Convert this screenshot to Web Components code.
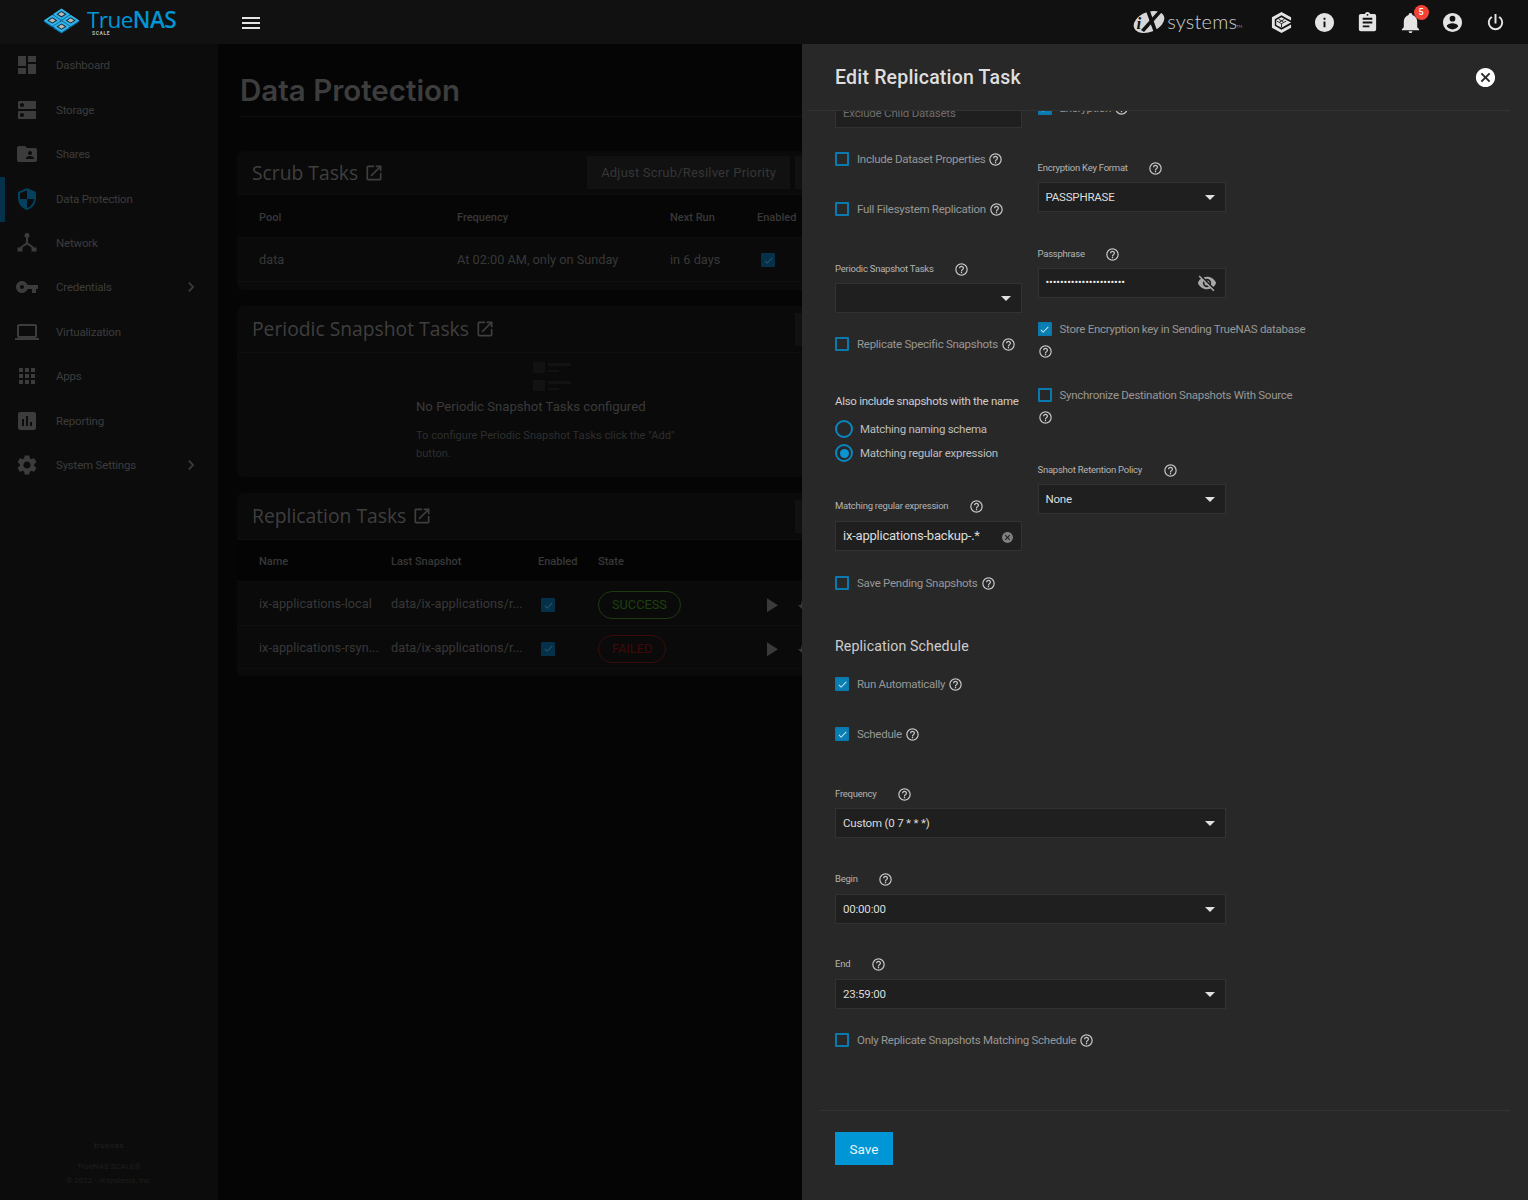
<!DOCTYPE html>
<html lang="en">
<head>
<meta charset="utf-8">
<title>Data Protection</title>
<style>
  html, body { margin: 0; background: #050505; }
  body { font-family: Roboto, "Liberation Sans", sans-serif; }
</style>
</head>
<body>
<tn-app>
  <tn-topbar slot="top"></tn-topbar>
  <tn-sidenav slot="nav">
    <tn-nav-item icon="dashboard">Dashboard</tn-nav-item>
    <tn-nav-item icon="storage">Storage</tn-nav-item>
    <tn-nav-item icon="shares">Shares</tn-nav-item>
    <tn-nav-item icon="shield" active>Data Protection</tn-nav-item>
    <tn-nav-item icon="network">Network</tn-nav-item>
    <tn-nav-item icon="key" more>Credentials</tn-nav-item>
    <tn-nav-item icon="laptop">Virtualization</tn-nav-item>
    <tn-nav-item icon="apps">Apps</tn-nav-item>
    <tn-nav-item icon="chart">Reporting</tn-nav-item>
    <tn-nav-item icon="gear" more>System Settings</tn-nav-item>
  </tn-sidenav>
  <tn-main slot="main">
    <tn-card heading="Scrub Tasks" action="Adjust Scrub/Resilver Priority" head-height="44" style="height:139px">
      <tn-table cols="198px 213px 87px 100px">
        <tn-row head style="padding-top:4px"><span>Pool</span><span>Frequency</span><span>Next Run</span><span>Enabled</span></tn-row>
        <tn-row style="padding-top:1px"><span>data</span><span>At 02:00 AM, only on Sunday</span><span>in 6 days</span><tn-tick></tn-tick></tn-row>
      </tn-table>
    </tn-card>
    <tn-card heading="Periodic Snapshot Tasks" head-height="47" style="height:171px;margin-top:16px">
      <tn-empty heading="No Periodic Snapshot Tasks configured">To configure Periodic Snapshot Tasks click the "Add" button.</tn-empty>
    </tn-card>
    <tn-card heading="Replication Tasks" head-height="47" style="height:183px;margin-top:16px">
      <tn-table cols="132px 147px 60px 161px 38px 30px">
        <tn-row head dark style="height:42px;padding-top:2px"><span>Name</span><span>Last Snapshot</span><span>Enabled</span><span>State</span></tn-row>
        <tn-row style="height:43.5px;padding-top:2px"><span>ix-applications-local</span><span>data/ix-applications/r...</span><tn-tick style="margin:2px 0 0 3px"></tn-tick><tn-chip kind="ok">SUCCESS</tn-chip><tn-icon name="play" size="24" color="#3a3a3a"></tn-icon><tn-icon name="restore" size="24" color="#3a3a3a"></tn-icon></tn-row>
        <tn-row style="height:43.5px;padding-top:2px"><span>ix-applications-rsyn...</span><span>data/ix-applications/r...</span><tn-tick style="margin:2px 0 0 3px"></tn-tick><tn-chip kind="bad">FAILED</tn-chip><tn-icon name="play" size="24" color="#3a3a3a"></tn-icon><tn-icon name="restore" size="24" color="#3a3a3a"></tn-icon></tn-row>
      </tn-table>
    </tn-card>
  </tn-main>
  <tn-slidein slot="panel" heading="Edit Replication Task">
    <tn-form-cols slot="form">
      <div slot="left">
        <tn-field dim value="Exclude Child Datasets"></tn-field>
        <tn-check style="margin-top:22px">Include Dataset Properties</tn-check>
        <tn-check style="margin-top:32px">Full Filesystem Replication</tn-check>
        <tn-label style="margin-top:43px;width:180px">Periodic Snapshot Tasks</tn-label>
        <tn-field select style="margin-top:6px"></tn-field>
        <tn-check style="margin-top:22px">Replicate Specific Snapshots</tn-check>
        <tn-heading style="margin-top:40px">Also include snapshots with the name</tn-heading>
        <tn-radio style="margin-top:10px">Matching naming schema</tn-radio>
        <tn-radio on style="margin-top:4px">Matching regular expression</tn-radio>
        <tn-label style="margin-top:35px">Matching regular expression</tn-label>
        <tn-field clear value="ix-applications-backup-.*" style="margin-top:7px"></tn-field>
        <tn-check style="margin-top:23px">Save Pending Snapshots</tn-check>
      </div>
      <div slot="right">
        <tn-check on style="margin-top:1px">Encryption</tn-check>
        <tn-label style="margin-top:43px">Encryption Key Format</tn-label>
        <tn-field select value="PASSPHRASE" style="margin-top:6px"></tn-field>
        <tn-label style="margin-top:34px">Passphrase</tn-label>
        <tn-field secret value="••••••••••••••••••••••" style="margin-top:6px"></tn-field>
        <tn-check wrap on style="margin-top:22px">Store Encryption key in Sending TrueNAS database</tn-check>
        <tn-check wrap style="margin-top:27px">Synchronize Destination Snapshots With Source</tn-check>
        <tn-label style="margin-top:37px">Snapshot Retention Policy</tn-label>
        <tn-field select value="None" style="margin-top:6px"></tn-field>
      </div>
    </tn-form-cols>
    <div slot="form" style="width:390.5px">
      <tn-heading big style="margin-top:45px">Replication Schedule</tn-heading>
      <tn-check on style="margin-top:20px">Run Automatically</tn-check>
      <tn-check on style="margin-top:32px">Schedule</tn-check>
      <tn-label style="margin-top:43px">Frequency</tn-label>
      <tn-field select value="Custom (0 7 * * *)" style="margin-top:6px"></tn-field>
      <tn-label style="margin-top:33px">Begin</tn-label>
      <tn-field select value="00:00:00" style="margin-top:7px"></tn-field>
      <tn-label style="margin-top:32px">End</tn-label>
      <tn-field select value="23:59:00" style="margin-top:7px"></tn-field>
      <tn-check style="margin-top:22px">Only Replicate Snapshots Matching Schedule</tn-check>
    </div>
  </tn-slidein>
</tn-app>

<script>
// material icon paths, all on a 24 box
const ICONS = {
  menu: 'M3,6H21V8H3V6M3,11H21V13H3V11M3,16H21V18H3V16Z',
  info: 'M13,9H11V7H13M13,17H11V11H13M12,2A10,10 0 0,0 2,12A10,10 0 0,0 12,22A10,10 0 0,0 22,12A10,10 0 0,0 12,2Z',
  clipboard: 'M17,9H7V7H17M17,13H7V11H17M14,17H7V15H14M12,3A1,1 0 0,1 13,4A1,1 0 0,1 12,5A1,1 0 0,1 11,4A1,1 0 0,1 12,3M19,3H14.82C14.4,1.84 13.3,1 12,1C10.7,1 9.6,1.84 9.18,3H5A2,2 0 0,0 3,5V19A2,2 0 0,0 5,21H19A2,2 0 0,0 21,19V5A2,2 0 0,0 19,3Z',
  bell: 'M21,19V20H3V19L5,17V11C5,7.9 7.03,5.17 10,4.29C10,4.19 10,4.1 10,4A2,2 0 0,1 12,2A2,2 0 0,1 14,4C14,4.1 14,4.19 14,4.29C16.97,5.17 19,7.9 19,11V17L21,19M14,21A2,2 0 0,1 12,23A2,2 0 0,1 10,21',
  account: 'M12,19.2C9.5,19.2 7.29,17.92 6,16C6.03,14 10,12.9 12,12.9C14,12.9 17.97,14 18,16C16.71,17.92 14.5,19.2 12,19.2M12,5A3,3 0 0,1 15,8A3,3 0 0,1 12,11A3,3 0 0,1 9,8A3,3 0 0,1 12,5M12,2A10,10 0 0,0 2,12A10,10 0 0,0 12,22A10,10 0 0,0 22,12A10,10 0 0,0 12,2Z',
  power: 'M16.56,5.44L15.11,6.89C16.84,7.94 18,9.83 18,12A6,6 0 0,1 12,18A6,6 0 0,1 6,12C6,9.83 7.16,7.94 8.88,6.88L7.44,5.44C5.36,6.88 4,9.28 4,12A8,8 0 0,0 12,20A8,8 0 0,0 20,12C20,9.28 18.64,6.88 16.56,5.44M13,3H11V13H13',
  help: 'M11,18H13V16H11V18M12,2A10,10 0 0,0 2,12A10,10 0 0,0 12,22A10,10 0 0,0 22,12A10,10 0 0,0 12,2M12,20C7.59,20 4,16.41 4,12C4,7.59 7.59,4 12,4C16.41,4 20,7.59 20,12C20,16.41 16.41,20 12,20M12,6A4,4 0 0,0 8,10H10A2,2 0 0,1 12,8A2,2 0 0,1 14,10C14,12 11,11.75 11,15H13C13,12.75 16,12.5 16,10A4,4 0 0,0 12,6Z',
  close: 'M12,2C17.53,2 22,6.47 22,12C22,17.53 17.53,22 12,22C6.47,22 2,17.53 2,12C2,6.47 6.47,2 12,2M15.59,7L12,10.59L8.41,7L7,8.41L10.59,12L7,15.59L8.41,17L12,13.41L15.59,17L17,15.59L13.41,12L17,8.41L15.59,7Z',
  eyeoff: 'M11.83,9L15,12.16C15,12.11 15,12.05 15,12A3,3 0 0,0 12,9C11.94,9 11.89,9 11.83,9M7.53,9.8L9.08,11.35C9.03,11.56 9,11.77 9,12A3,3 0 0,0 12,15C12.22,15 12.44,14.97 12.65,14.92L14.2,16.47C13.53,16.8 12.79,17 12,17A5,5 0 0,1 7,12C7,11.21 7.2,10.47 7.53,9.8M2,4.27L4.28,6.55L4.73,7C3.08,8.3 1.78,10 1,12C2.73,16.39 7,19.5 12,19.5C13.55,19.5 15.03,19.2 16.38,18.66L16.81,19.08L19.73,22L21,20.73L3.27,3M12,7A5,5 0 0,1 17,12C17,12.64 16.87,13.26 16.64,13.82L19.57,16.75C21.07,15.5 22.27,13.86 23,12C21.27,7.61 17,4.5 12,4.5C10.6,4.5 9.26,4.75 8,5.2L10.17,7.35C10.74,7.13 11.35,7 12,7Z',
  dashboard: 'M13,3V9H21V3M13,21H21V11H13M3,21H11V15H3M3,13H11V3H3V13Z',
  storage: 'M20 13H4c-.55 0-1 .45-1 1v6c0 .55.45 1 1 1h16c.55 0 1-.45 1-1v-6c0-.55-.45-1-1-1zM7 19c-1.1 0-2-.9-2-2s.9-2 2-2 2 .9 2 2-.9 2-2 2zM20 3H4c-.55 0-1 .45-1 1v6c0 .55.45 1 1 1h16c.55 0 1-.45 1-1V4c0-.55-.45-1-1-1zM7 9c-1.1 0-2-.9-2-2s.9-2 2-2 2 .9 2 2-.9 2-2 2z',
  shares: 'M20 6h-8l-2-2H4c-1.1 0-1.99.9-1.99 2L2 18c0 1.1.9 2 2 2h16c1.1 0 2-.9 2-2V8c0-1.1-.9-2-2-2zm-5 3c1.1 0 2 .9 2 2s-.9 2-2 2-2-.9-2-2 .9-2 2-2zm4 8h-8v-1c0-1.33 2.67-2 4-2s4 .67 4 2v1z',
  shield: 'M12 1L3 5v6c0 5.55 3.84 10.74 9 12 5.16-1.26 9-6.45 9-12V5l-9-4zm0 10.99h7c-.53 4.12-3.28 7.79-7 8.94V12H5V6.3l7-3.11v8.8z',
  network: 'M12 2a2.5 2.5 0 1 1-.01 0zM11 6.5h2v5.2l6 4.2-1.1 1.6-5.9-4.1-5.9 4.1L5 15.9l6-4.2zM2.5 16.5h5v4h-5zM16.5 16.5h5v4h-5z',
  key: 'M12.65 10C11.83 7.67 9.61 6 7 6c-3.31 0-6 2.69-6 6s2.69 6 6 6c2.61 0 4.83-1.67 5.65-4H17v4h4v-4h2v-4H12.65zM7 14c-1.1 0-2-.9-2-2s.9-2 2-2 2 .9 2 2-.9 2-2 2z',
  laptop: 'M20 18c1.1 0 1.99-.9 1.99-2L22 6c0-1.1-.9-2-2-2H4c-1.1 0-2 .9-2 2v10c0 1.1.9 2 2 2H0v2h24v-2h-4zM4 6h16v10H4V6z',
  apps: 'M4 8h4V4H4v4zm6 12h4v-4h-4v4zm-6 0h4v-4H4v4zm0-6h4v-4H4v4zm6 0h4v-4h-4v4zm6-10v4h4V4h-4zm-6 4h4V4h-4v4zm6 6h4v-4h-4v4zm0 6h4v-4h-4v4z',
  chart: 'M19 3H5c-1.1 0-2 .9-2 2v14c0 1.1.9 2 2 2h14c1.1 0 2-.9 2-2V5c0-1.1-.9-2-2-2zM9 17H7v-7h2v7zm4 0h-2V7h2v10zm4 0h-2v-4h2v4z',
  gear: 'M19.14 12.94c.04-.3.06-.61.06-.94 0-.32-.02-.64-.07-.94l2.03-1.58c.18-.14.23-.41.12-.61l-1.92-3.32c-.12-.22-.37-.29-.59-.22l-2.39.96c-.5-.38-1.03-.7-1.62-.94l-.36-2.54c-.04-.24-.24-.41-.48-.41h-3.84c-.24 0-.43.17-.47.41l-.36 2.54c-.59.24-1.13.57-1.62.94l-2.39-.96c-.22-.08-.47 0-.59.22L2.74 8.87c-.12.21-.08.47.12.61l2.03 1.58c-.05.3-.09.63-.09.94s.02.64.07.94l-2.03 1.58c-.18.14-.23.41-.12.61l1.92 3.32c.12.22.37.29.59.22l2.39-.96c.5.38 1.03.7 1.62.94l.36 2.54c.05.24.24.41.48.41h3.84c.24 0 .44-.17.47-.41l.36-2.54c.59-.24 1.13-.56 1.62-.94l2.39.96c.22.08.47 0 .59-.22l1.92-3.32c.12-.22.07-.47-.12-.61l-2.01-1.58zM12 15.6c-1.98 0-3.6-1.62-3.6-3.6s1.62-3.6 3.6-3.6 3.6 1.62 3.6 3.6-1.62 3.6-3.6 3.6z',
  open: 'M19 19H5V5h7V3H5c-1.11 0-2 .9-2 2v14c0 1.1.89 2 2 2h14c1.1 0 2-.9 2-2v-7h-2v7zM14 3v2h3.59l-9.83 9.83 1.41 1.41L19 6.41V10h2V3h-7z',
  chevron: 'M8.59,16.58L13.17,12L8.59,7.41L10,6L16,12L10,18L8.59,16.58Z',
  check: 'M21,7L9,19L3.5,13.5L4.91,12.09L9,16.17L19.59,5.59L21,7Z',
  play: 'M8,5.14V19.14L19,12.14L8,5.14Z',
  restore: 'M13,3A9,9 0 0,0 4,12H1L5,16L9,12H6A7,7 0 0,1 13,5A7,7 0 0,1 20,12A7,7 0 0,1 13,19V21A9,9 0 0,0 13,3Z'
};

// every element in this page is a small shadow component, this saves repeating the attach
class Base extends HTMLElement {
  render(html) {
    if (!this.shadowRoot) this.attachShadow({mode: 'open'});
    this.shadowRoot.innerHTML = html;
  }
}

class TnIcon extends Base {
  connectedCallback() {
    const size = this.getAttribute('size') || 24;
    const color = this.getAttribute('color') || 'currentColor';
    this.render(`<style>:host{display:inline-flex;flex:none;width:${size}px;height:${size}px}svg{display:block}</style>
      <svg width="${size}" height="${size}" viewBox="0 0 24 24" fill="${color}"><path d="${ICONS[this.getAttribute('name')]}"/></svg>`);
  }
}
customElements.define('tn-icon', TnIcon);

class TnApp extends Base {
  connectedCallback() {
    this.render(`<style>
      :host{display:block;position:relative;width:1528px;height:1200px;overflow:hidden}
      .body{display:flex;height:1156px}
      .panel{position:absolute;top:44px;right:0;bottom:0;width:726px}
    </style>
    <slot name="top"></slot>
    <div class="body"><slot name="nav"></slot><slot name="main"></slot></div>
    <div class="panel"><slot name="panel"></slot></div>`);
  }
}
customElements.define('tn-app', TnApp);

class TnLogo extends Base {
  connectedCallback() {
    // isometric mark: four blue tiles, each with a grey centre
    const diamond = (cx, cy, w, h, fill) => `<polygon points="${cx},${cy - h} ${cx + w},${cy} ${cx},${cy + h} ${cx - w},${cy}" fill="${fill}"/>`;
    let tiles = '';
    [[18.5, 6.2], [9.3, 12.4], [27.7, 12.4], [18.5, 18.6]].forEach(([cx, cy]) => {
      tiles += diamond(cx, cy + 1.4, 8.6, 5.6, '#0b6ea6');
      tiles += diamond(cx, cy, 8.6, 5.6, '#2fb3ea');
      tiles += diamond(cx, cy, 5, 3.2, '#0e2530');
      tiles += diamond(cx, cy, 3.3, 2.1, '#b9b9b9');
    });
    this.render(`<style>
      :host{display:block;position:relative;width:140px;height:44px;flex:none}
      .wrap{display:flex;align-items:center;height:44px}
      svg{flex:none;display:block;margin-top:-3px}
      .name{font:400 22.6px/22px "Open Sans",Roboto,sans-serif;color:#0095d5;margin-left:7px;margin-top:-5px;letter-spacing:-.6px}
      .name b{font-weight:600}
      .scale{position:absolute;left:49px;top:31px;font:700 5px/5px Roboto,sans-serif;color:#bbb;letter-spacing:.6px}
    </style>
    <div class="wrap"><svg width="37" height="26" viewBox="0 0 37 26">${tiles}</svg><span class="name">True<b>NAS</b></span></div>
    <span class="scale">SCALE</span>`);
  }
}
customElements.define('tn-logo', TnLogo);

class TnTopbar extends Base {
  connectedCallback() {
    this.render(`<style>
      :host{display:flex;align-items:center;height:44px;background:#111;box-sizing:border-box;padding-left:43px;color:#e4e4e4}
      .menu{margin-left:56px;margin-top:1px;display:flex}
      .right{margin-left:auto;display:flex;align-items:center}
      .brand{display:flex;align-items:center;width:137px;color:#cfcfcf}
      .brand span{font:300 20px/24px Lato,sans-serif;margin-left:2px;margin-top:-2px;letter-spacing:.2px}
      .brand sup{font:300 4px/5px Lato,sans-serif;align-self:flex-start;margin-top:15px;margin-left:-1px}
      .icons{display:flex;gap:19.75px;padding-right:21px;align-items:center}
      .bell{position:relative;display:flex}
      .badge{position:absolute;left:15px;top:-6px;width:15px;height:15px;border-radius:50%;background:#f44336;color:#fff;font:500 9px/15px Roboto,sans-serif;text-align:center}
    </style>
    <tn-logo></tn-logo>
    <span class="menu"><tn-icon name="menu" size="24"></tn-icon></span>
    <div class="right">
      <div class="brand">
        <svg width="32" height="26" viewBox="0 0 32 26"><ellipse cx="16" cy="13" rx="16" ry="10" transform="rotate(-22 16 13)" fill="#d6d6d6"/><path d="M13 2 L17 2 L25 24 L21 24Z" fill="#111"/><path d="M29 3 L11 23 L8 21 L26 1Z" fill="#111"/><text x="3.5" y="20" font-family="Liberation Serif,serif" font-style="italic" font-weight="700" font-size="17" fill="#111">i</text></svg>
        <span>systems</span><sup>TM</sup>
      </div>
      <div class="icons">
        <svg width="23" height="23" viewBox="0 0 24 24" style="margin-left:-.5px;margin-right:.5px"><path d="M12 1 22 6.5V10L17 7.3 12 4.5 5 8.5V15.5L12 19.5 22 14V17.5L12 23 2 17.5V6.5Z" fill="#e4e4e4"/><path d="M12 6.5 18 10 22 12 18 14 12 17.5 6.5 14.5V9.5Z" fill="#e4e4e4"/><path d="M7 10.5 12 13.2 17 10.5M12 13.2V17M9 8.6 14 11.4M15 8.6 10 11.4" stroke="#111" stroke-width=".9" fill="none"/></svg>
        <tn-icon name="info" size="23"></tn-icon>
        <tn-icon name="clipboard" size="23"></tn-icon>
        <span class="bell"><tn-icon name="bell" size="23"></tn-icon><span class="badge">5</span></span>
        <tn-icon name="account" size="23"></tn-icon>
        <tn-icon name="power" size="23"></tn-icon>
      </div>
    </div>`);
  }
}
customElements.define('tn-topbar', TnTopbar);

class TnSidenav extends Base {
  connectedCallback() {
    this.render(`<style>
      :host{display:flex;flex-direction:column;flex:none;width:218px;height:1156px;background:#0c0c0c;box-sizing:border-box}
      .foot{margin-top:auto;padding-bottom:12px;text-align:center;font:400 8px/14px Roboto,sans-serif;color:#1e1e1e}
      .foot div:first-child{margin-bottom:7px;font-weight:500;letter-spacing:.4px}
    </style>
    <slot></slot>
    <div class="foot"><div>truenas</div><div>TrueNAS SCALE®</div><div>© 2022 - iXsystems, Inc.</div></div>`);
  }
}
customElements.define('tn-sidenav', TnSidenav);

class TnNavItem extends Base {
  connectedCallback() {
    const active = this.hasAttribute('active');
    this.render(`<style>
      :host{display:flex;align-items:center;height:44.44px;position:relative;font:400 11.5px/16px Roboto,sans-serif;letter-spacing:-.2px;color:#3c3c3c;box-sizing:border-box;padding-bottom:2px;padding-left:${active ? 10 : 15}px;border-left:${active ? '5px solid #04324a' : '0'}}
      .txt{margin-left:17px}
      .arrow{margin-left:auto;margin-right:17px;display:flex}
    </style>
    <tn-icon name="${this.getAttribute('icon')}" size="24" color="${active ? '#05405f' : '#3c3c3c'}"></tn-icon>
    <span class="txt"><slot></slot></span>
    ${this.hasAttribute('more') ? '<span class="arrow"><tn-icon name="chevron" size="20" color="#3c3c3c"></tn-icon></span>' : ''}`);
  }
}
customElements.define('tn-nav-item', TnNavItem);

class TnMain extends Base {
  connectedCallback() {
    this.render(`<style>
      :host{display:block;flex:1;min-width:0;overflow:hidden;background:#050505;padding:0 18px 0 19px;box-sizing:border-box}
      h1{margin:0 0 0 3px;height:73px;box-sizing:border-box;padding-top:29px;font:600 29.5px/34px Inter,Roboto,sans-serif;color:#3d3d3d;border-bottom:1px solid #0e0e0e}
      .cards{padding-top:34px}
    </style>
    <h1>Data Protection</h1>
    <div class="cards"><slot></slot></div>`);
  }
}
customElements.define('tn-main', TnMain);

class TnCard extends Base {
  connectedCallback() {
    const action = this.getAttribute('action');
    this.render(`<style>
      :host{display:block;background:#0a0a0a;border-radius:6px;overflow:hidden}
      .head{display:flex;align-items:center;height:${this.getAttribute('head-height')}px;padding:0 0 0 15px;border-bottom:1px solid #0e0e0e;box-sizing:border-box}
      h3{margin:0;font:400 19.3px/24px "Open Sans",Roboto,sans-serif;color:#3f3f3f;letter-spacing:0}
      tn-icon{margin-left:6px}
      .actions{margin-left:auto;display:flex;gap:5px;position:relative;left:-655px}
      button{all:unset;height:33px;background:#111;color:#363636;font:400 13px/33px Roboto,sans-serif;padding:0 14px;letter-spacing:.2px;white-space:nowrap}
      button.blank{width:60px;padding:0}
    </style>
    <div class="head"><h3>${this.getAttribute('heading')}</h3><tn-icon name="open" size="20" color="#3f3f3f"></tn-icon>
      <div class="actions">${action ? `<button>${action}</button>` : ''}<button class="blank"></button></div></div>
    <slot></slot>`);
  }
}
customElements.define('tn-card', TnCard);

class TnTable extends Base {
  connectedCallback() {
    this.style.setProperty('--cols', this.getAttribute('cols'));
    this.render(`<style>:host{display:block}</style><slot></slot>`);
  }
}
customElements.define('tn-table', TnTable);

class TnRow extends Base {
  connectedCallback() {
    const head = this.hasAttribute('head');
    const dark = this.hasAttribute('dark');
    this.render(`<style>
      :host{display:grid;grid-template-columns:var(--cols);align-items:center;padding-left:22px;
        height:${head ? 43 : 44}px;box-sizing:border-box;border-bottom:1px solid #0e0e0e;
        background:${head ? (dark ? '#040404' : '#060606') : 'transparent'};
        font:${head ? '500 11px' : '400 12.75px'}/16px Roboto,sans-serif;color:#383838}
      ::slotted(span){white-space:nowrap;overflow:hidden}
      ::slotted(tn-tick){margin-left:4px}
      ::slotted(tn-chip),::slotted(tn-icon){margin-top:2px}
    </style><slot></slot>`);
  }
}
customElements.define('tn-row', TnRow);

class TnTick extends Base {
  connectedCallback() {
    this.render(`<style>
      :host{display:flex;align-items:center;justify-content:center;width:14px;height:14px;background:#04304a;border-radius:1px}
    </style><tn-icon name="check" size="11" color="#2d566a"></tn-icon>`);
  }
}
customElements.define('tn-tick', TnTick);

class TnChip extends Base {
  connectedCallback() {
    const ok = this.getAttribute('kind') == 'ok';
    this.render(`<style>
      :host{justify-self:start;height:28px;box-sizing:border-box;padding:0 13px;border-radius:14px;font:400 12.75px/26px Roboto,sans-serif;
        border:1px solid ${ok ? '#1d3a10' : '#3a0c0c'};color:${ok ? '#1d4010' : '#430909'}}
    </style><slot></slot>`);
  }
}
customElements.define('tn-chip', TnChip);

class TnEmpty extends Base {
  connectedCallback() {
    this.render(`<style>
      :host{display:block;padding:9px 0 0 179px;width:265px;color:#333}
      svg{display:block;margin-left:117px}
      h4{margin:6px 0 0;width:300px;font:400 13.15px/18px Roboto,sans-serif;color:#3a3a3a;white-space:nowrap}
      p{margin:11px 0 0;font:400 11.1px/18px Roboto,sans-serif;color:#2e2e2e}
    </style>
    <svg width="40" height="30" viewBox="0 0 40 30" fill="#121212"><rect y="0" width="12" height="11"/><rect y="18" width="12" height="11"/><rect x="15" y="1" width="23" height="3"/><rect x="15" y="8" width="11" height="2"/><rect x="15" y="19" width="23" height="3"/><rect x="15" y="26" width="11" height="2"/></svg>
    <h4>${this.getAttribute('heading')}</h4>
    <p><slot></slot></p>`);
  }
}
customElements.define('tn-empty', TnEmpty);

class TnSlidein extends Base {
  connectedCallback() {
    this.render(`<style>
      :host{display:flex;flex-direction:column;height:100%;background:#282828;color:#ddd}
      header{flex:none;height:67px;display:flex;align-items:center;box-sizing:border-box;margin:0 18px 0 5px;padding:0 13px 0 28px;border-bottom:1px solid #333}
      h2{margin:2px 0 0;font:500 19.5px/24px Roboto,sans-serif;color:#dedede;letter-spacing:.2px}
      .x{margin-left:auto;display:flex}
      .scroll{flex:1;min-height:0;overflow:hidden;padding-left:33px}
      .inner{margin-top:-13px}
      footer{flex:none;height:90px;margin:0 18px;border-top:1px solid #333;box-sizing:border-box;padding:21px 0 0 15px}
      button{all:unset;display:block;width:58px;height:33px;background:#0095d5;color:#e8f6fc;font:400 13.5px/35px Roboto,sans-serif;text-align:center}
    </style>
    <header><h2>${this.getAttribute('heading')}</h2><span class="x"><tn-icon name="close" size="23" color="#fff"></tn-icon></span></header>
    <div class="scroll"><div class="inner"><slot name="form"></slot></div></div>
    <footer><button>Save</button></footer>`);
  }
}
customElements.define('tn-slidein', TnSlidein);

class TnFormCols extends Base {
  connectedCallback() {
    this.render(`<style>
      :host{display:flex;gap:15.5px}
      ::slotted([slot=left]){width:187px;flex:none}
      ::slotted([slot=right]){width:188px;flex:none}
    </style><slot name="left"></slot><slot name="right"></slot>`);
  }
}
customElements.define('tn-form-cols', TnFormCols);

class TnLabel extends Base {
  connectedCallback() {
    this.render(`<style>
      :host{display:flex;align-items:center;height:16px;font:400 9.5px/16px Roboto,sans-serif;letter-spacing:-.24px;color:#b4b4b4;white-space:nowrap}
      tn-icon{margin-left:20.5px}
    </style><slot></slot><tn-icon name="help" size="15" color="#c8c8c8"></tn-icon>`);
  }
}
customElements.define('tn-label', TnLabel);

class TnHeading extends Base {
  connectedCallback() {
    const big = this.hasAttribute('big');
    this.render(`<style>
      :host{display:block;height:${big ? 18 : 16}px;font:${big ? '400 14.2px/18px' : '400 11.5px/16px'} Roboto,sans-serif;letter-spacing:${big ? '.1px' : '-.29px'};color:#cdcdcd;white-space:nowrap}
    </style><slot></slot>`);
  }
}
customElements.define('tn-heading', TnHeading);

class TnCheck extends Base {
  connectedCallback() {
    const on = this.hasAttribute('on');
    const wrap = this.hasAttribute('wrap');
    this.render(`<style>
      :host{display:flex;flex-wrap:${wrap ? 'wrap' : 'nowrap'};align-items:center;width:${wrap ? '300px' : 'auto'};font:400 11.5px/18px Roboto,sans-serif;letter-spacing:-.27px;color:#979797;white-space:nowrap;min-height:18px}
      .box{flex:none;width:14px;height:14px;box-sizing:border-box;border:2px solid #0a79ad;background:${on ? '#0a7fb5' : 'transparent'};border-radius:1px;display:flex;align-items:center;justify-content:center;margin-right:8px}
      .help{display:flex;margin-left:3px}
      .help.down{flex-basis:100%;margin:6px 0 0 0}
    </style>
    <span class="box">${on ? '<tn-icon name="check" size="11" color="#cfe7f2"></tn-icon>' : ''}</span>
    <slot></slot>
    <span class="help ${wrap ? 'down' : ''}"><tn-icon name="help" size="15" color="#c8c8c8"></tn-icon></span>`);
  }
}
customElements.define('tn-check', TnCheck);

class TnRadio extends Base {
  connectedCallback() {
    const on = this.hasAttribute('on');
    this.render(`<style>
      :host{display:flex;align-items:center;height:20px;font:400 11.5px/18px Roboto,sans-serif;letter-spacing:-.27px;color:#bdbdbd;white-space:nowrap}
      .ring{flex:none;width:18px;height:18px;box-sizing:border-box;border:2px solid #0a86c0;border-radius:50%;margin-right:7px;display:flex;align-items:center;justify-content:center}
      .ring i{width:9px;height:9px;border-radius:50%;background:#0a95d5}
    </style><span class="ring">${on ? '<i></i>' : ''}</span><slot></slot>`);
  }
}
customElements.define('tn-radio', TnRadio);

class TnField extends Base {
  connectedCallback() {
    const value = this.getAttribute('value') || '';
    const dim = this.hasAttribute('dim');
    const clear = this.hasAttribute('clear');
    const secret = this.hasAttribute('secret');
    let tail = '';
    if (this.hasAttribute('select')) tail = '<i class="caret"></i>';
    if (clear) tail = '<tn-icon name="close" size="13" color="#808080"></tn-icon>';
    if (secret) tail = '<tn-icon name="eyeoff" size="20" color="#a8a8a8"></tn-icon>';
    this.render(`<style>
      :host{display:flex;align-items:center;height:30px;box-sizing:border-box;background:#1f1f1f;border:1px solid #323232;padding:0 9px 0 7px;
        font:400 ${clear ? 13 : 11.5}px/16px Roboto,sans-serif;letter-spacing:${clear ? -.22 : -.2}px;color:${dim ? '#6e6e6e' : '#dcdcdc'};white-space:nowrap}
      .v{flex:1;min-width:0;${clear ? 'padding-bottom:1px;' : ''}${secret ? 'font-size:11px;letter-spacing:-.1px;color:#eee;' : ''}}
      .caret{width:0;height:0;border:5px solid transparent;border-top-color:#e0e0e0;border-bottom:0;margin-right:1px}
      tn-icon{margin-right:${clear ? -2 : -1}px;margin-top:${clear ? 2 : 0}px}
    </style><span class="v">${value}</span>${tail}`);
  }
}
customElements.define('tn-field', TnField);
</script>
</body>
</html>
